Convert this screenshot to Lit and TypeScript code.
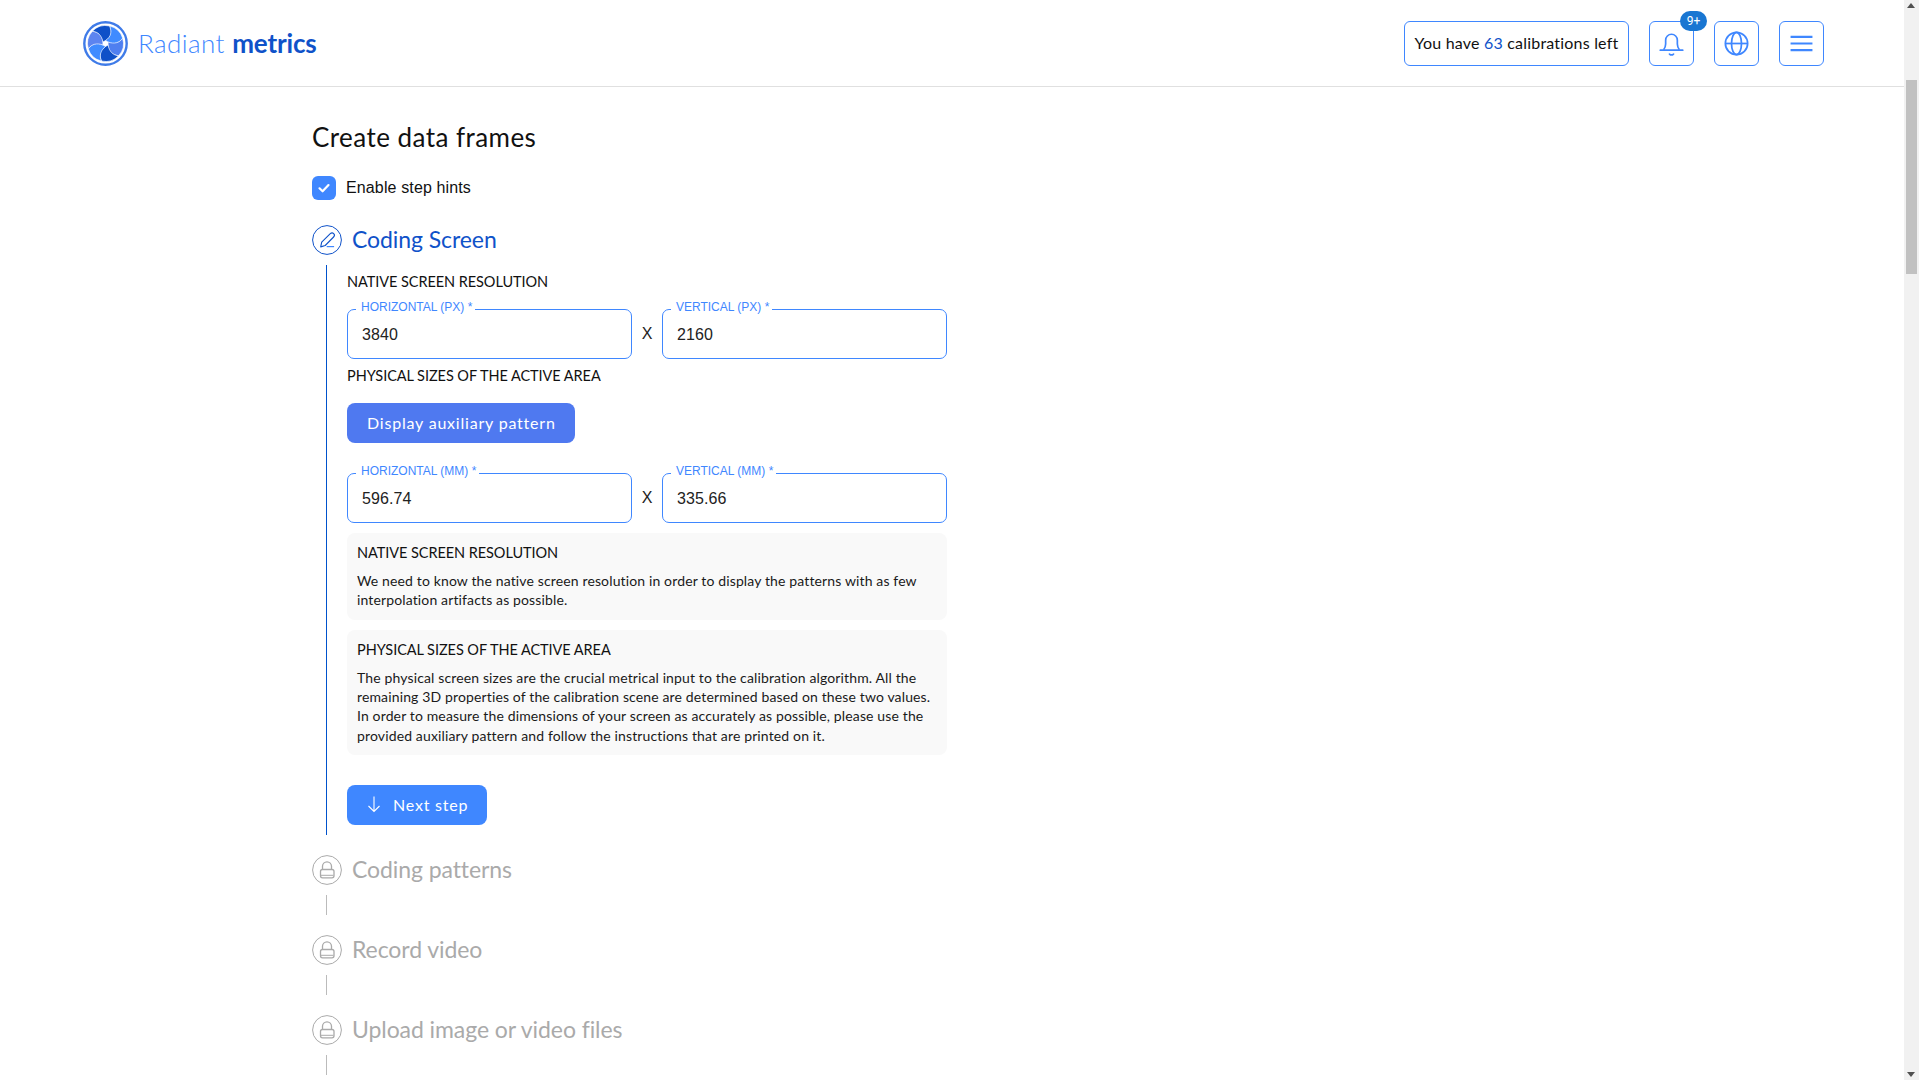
import { LitElement, html, css, svg } from "lit";
import { customElement } from "lit/decorators.js";

const blades = [
  { a: 0, c: "#3f8bff" },
  { a: 60, c: "#4f7ff0" },
  { a: 120, c: "#0e50c8" },
  { a: 180, c: "#3f8bff" },
  { a: 240, c: "#5c84f0" },
  { a: 300, c: "#0e50c8" },
];

const logo = html`<svg class="logo" viewBox="0 0 45 45" aria-hidden="true">
  <circle cx="22.5" cy="22.5" r="21.2" fill="none" stroke="#3f7be8" stroke-width="2.4"></circle>
  <g transform="translate(22.5 22.5)">
    ${blades.map(
      (b) => svg`<path transform="rotate(${b.a})" fill=${b.c} stroke="#fff" stroke-width=".55"
        d="M0-3C5-7 6.500-12.500 4-17.500A17.900 17.900 0 0 1 17.160-5.290C13.500-.2 8.600 1.600 2.600-1.500Z"></path>`
    )}
  </g>
</svg>`;

const bell = html`<svg viewBox="0 0 24 24" class="ico bell" aria-hidden="true">
  <path d="M5 17.500c1.100-1.400 1.800-3 1.800-5V9a5.200 5.200 0 0 1 10.400 0v3.500c0 2 .7 3.600 1.800 5" fill="none" stroke="currentColor" stroke-width="1.500" stroke-linejoin="round"></path>
  <path d="M2 17.900h20" fill="none" stroke="currentColor" stroke-width="1.500" stroke-linecap="round"></path>
  <path d="M10.200 21.400c1 .9 2.600.9 3.600 0" fill="none" stroke="currentColor" stroke-width="1.500" stroke-linecap="round"></path>
</svg>`;

const globe = html`<svg viewBox="0 0 26 26" class="ico" aria-hidden="true">
  <g fill="none" stroke="currentColor" stroke-width="1.800">
    <circle cx="13" cy="13" r="11.600"></circle>
    <ellipse cx="13" cy="13" rx="5.200" ry="11.600"></ellipse>
    <path d="M1.400 13h23.200"></path>
  </g>
</svg>`;

const menu = html`<svg viewBox="0 0 24 24" class="ico" aria-hidden="true">
  <path d="M1.500 5.600h21M1.500 12h21M1.500 18.400h21" fill="none" stroke="currentColor" stroke-width="2.100"></path>
</svg>`;

const pencil = html`<svg viewBox="0 0 30 30" class="step-ico" aria-hidden="true">
  <circle cx="15" cy="15" r="14.400" fill="none" stroke="currentColor" stroke-width="1"></circle>
  <path d="M8.700 21.900l1-4.800 8.600-8.400c1-1 2.500-1 3.400-.1s.9 2.400-.1 3.400l-8.400 8.500z" fill="none" stroke="currentColor" stroke-width="1.100" stroke-linejoin="round"></path>
  <path d="M14.700 21.600h7.400" fill="none" stroke="#3f87ff" stroke-width="1.200"></path>
</svg>`;

const lock = html`<svg viewBox="0 0 30 30" class="step-ico" aria-hidden="true">
  <circle cx="15" cy="15" r="14.400" fill="none" stroke="currentColor" stroke-width="1"></circle>
  <path d="M10.500 14.500v-3.200a4.500 4.500 0 0 1 9 0v3.200" fill="none" stroke="currentColor" stroke-width="1.300"></path>
  <rect x="8.500" y="14.500" width="13.500" height="8.300" rx="2" fill="none" stroke="currentColor" stroke-width="1.300"></rect>
  <path d="M9 20.300h12.500" fill="none" stroke="currentColor" stroke-width="1"></path>
</svg>`;

const check = html`<svg viewBox="0 0 24 24" class="check" aria-hidden="true">
  <path d="M7.500 12.300l3.100 3 5.900-6.200" fill="none" stroke="#fff" stroke-width="2.200" stroke-linecap="round" stroke-linejoin="round"></path>
</svg>`;

const arrow = html`<svg viewBox="0 0 14 20" class="arrow" aria-hidden="true">
  <path d="M7 2.500v15M1.500 12l5.500 5.500 5.500-5.500" fill="none" stroke="#fff" stroke-width="1.100"></path>
</svg>`;

const field = (label: string, value: string) => html`<div class="field">
  <label>${label}</label>
  <input .value=${value} />
</div>`;

@customElement("app-root")
export class AppRoot extends LitElement {
  static styles = css`
    :host {
      display: block;
      height: 1080px;
      overflow: hidden;
      background: #fff;
      color: #111;
      font-family: "Lato", "Open Sans", sans-serif;
      --blue: #3f87ff;
      --deep: #0f52c9;
    }
    * { box-sizing: border-box; }
    .page { width: 1904px; }
    header {
      height: 87px;
      border-bottom: 1px solid #e0e0e0;
      display: flex;
      align-items: center;
      padding: 0 80px 0 83px;
    }
    .brand { display: flex; align-items: center; gap: 10px; }
    .logo { width: 45px; height: 45px; display: block; }
    .wordmark { font-size: 26px; line-height: 34px; padding-bottom: 1px; font-weight: 300; color: var(--blue); letter-spacing: .4px; white-space: pre; }
    .wordmark b { font-weight: 700; color: var(--deep); letter-spacing: -.15px; }
    .tools { margin-left: auto; display: flex; align-items: center; gap: 20px; }
    .calib {
      height: 45px;
      width: 225px;
      padding-bottom: 1px;
      border: 1px solid var(--blue);
      border-radius: 6px;
      display: flex;
      align-items: center;
      justify-content: center;
      font-size: 16px;
      letter-spacing: .2px;
      white-space: pre;
    }
    .calib b { font-weight: 400; color: var(--deep); }
    .tbtn {
      position: relative;
      width: 45px;
      height: 45px;
      border: 1px solid var(--blue);
      border-radius: 6px;
      color: var(--blue);
      display: flex;
      align-items: center;
      justify-content: center;
    }
    .ico { width: 25px; height: 25px; display: block; }
    .ico.bell { width: 27px; height: 27px; }
    .badge {
      position: absolute;
      top: -11px;
      right: -14px;
      width: 27px;
      height: 20px;
      border-radius: 10px;
      background: #1976d2;
      color: #fff;
      font: 12px/20px "Roboto", sans-serif;
      text-align: center;
    }
    main { padding: 33px 0 0 312px; }
    h1 { margin: 0; font-size: 26px; line-height: 34px; font-weight: 400; letter-spacing: .45px; color: #111; }
    .hints {
      margin-top: 22px;
      height: 24px;
      display: flex;
      align-items: center;
      gap: 10px;
      font: 16px/24px "Liberation Sans", sans-serif;
      letter-spacing: .13px;
    }
    .box { width: 24px; height: 24px; border-radius: 6px; background: var(--blue); }
    .check { width: 24px; height: 24px; display: block; }
    .step-head {
      margin-top: 20px;
      height: 30px;
      display: flex;
      align-items: center;
      gap: 10px;
      font-size: 23px;
      line-height: 28px;
      letter-spacing: -.08px;
      color: #aaa;
    }
    .step-head span { padding-bottom: 2px; }
    .step-head.first { margin-top: 25px; }
    .step-head.active { color: var(--deep); }
    .step-ico { width: 30px; height: 30px; display: block; flex: none; color: #aaa; }
    .active .step-ico { color: var(--deep); }
    .rail {
      margin: 10px 0 0 14px;
      height: 20px;
      width: 1px;
      background: #bbb;
    }
    .body {
      margin: 10px 0 0 14px;
      border-left: 1px solid #0052cc;
      padding: 6px 0 10px 20px;
      width: 621px;
      height: 570px;
    }
    .cap { font-size: 14.5px; line-height: 21px; margin-bottom: -1px; letter-spacing: -.06px; color: #111; }
    .pair {
      margin-top: 18px;
      display: grid;
      grid-template-columns: 285px 30px 285px;
      align-items: center;
    }
    .pair.low { margin-top: 30px; }
    .x { text-align: center; font: 16px/20px "Liberation Sans", sans-serif; color: #222; }
    .field {
      position: relative;
      height: 50px;
      border: 1px solid var(--blue);
      border-radius: 7px;
    }
    .field label {
      position: absolute;
      top: -10px;
      left: 8px;
      padding: 0 3px 0 5px;
      background: #fff;
      color: var(--blue);
      font: 12px/14px "Liberation Sans", sans-serif;
      white-space: nowrap;
    }
    .field input {
      width: 100%;
      height: 100%;
      border: 0;
      outline: 0;
      background: transparent;
      padding: 2px 14px 0;
      font: 16px "Liberation Sans", sans-serif;
      letter-spacing: .1px;
      color: #222;
    }
    .cap.second { margin-top: 6px; }
    .btn {
      display: flex;
      align-items: center;
      height: 40px;
      border: 0;
      border-radius: 8px;
      color: #fff;
      font-family: inherit;
      font-size: 16px;
      letter-spacing: .8px;
      white-space: nowrap;
      padding: 0 20px 2px;
    }
    .btn.aux { margin-top: 18px; width: 228px; background: #4f79f0; }
    .btn.next { margin-top: 30px; width: 140px; background: var(--blue); gap: 12px; }
    .arrow { width: 14px; height: 20px; display: block; flex: none; }
    .hint {
      margin-top: 10px;
      width: 600px;
      background: #f9f9f9;
      border-radius: 8px;
      padding: 9px 10px 10.5px;
      color: #1a1a1a;
    }
    .hint p { margin: 9px 0 0; font-size: 14px; line-height: 19.2px; letter-spacing: .135px; }
    .sb {
      position: fixed;
      top: 0;
      left: 1904px;
      width: 15px;
      height: 1080px;
      background: #f1f1f1;
    }
    .thumb { position: absolute; top: 80px; left: 2px; width: 11px; height: 194px; background: #c1c1c1; }
    .tri { position: absolute; left: 3px; width: 0; height: 0; border: 4.5px solid transparent; }
    .tri.up { top: 3px; border-top-width: 0; border-bottom: 5px solid #505050; }
    .tri.down { bottom: 3px; border-bottom-width: 0; border-top: 5px solid #505050; }
  `;

  render() {
    return html`
      <div class="page">
        <header>
          <div class="brand">
            ${logo}
            <div class="wordmark">Radiant <b>metrics</b></div>
          </div>
          <div class="tools">
            <div class="calib">You have <b>63</b> calibrations left</div>
            <div class="tbtn">${bell}<span class="badge">9+</span></div>
            <div class="tbtn">${globe}</div>
            <div class="tbtn">${menu}</div>
          </div>
        </header>
        <main>
          <h1>Create data frames</h1>
          <div class="hints"><span class="box">${check}</span><span>Enable step hints</span></div>
          <div class="step-head first active">${pencil}<span>Coding Screen</span></div>
          <section class="body">
            <div class="cap">NATIVE SCREEN RESOLUTION</div>
            <div class="pair">
              ${field("HORIZONTAL (PX) *", "3840")}
              <span class="x">X</span>
              ${field("VERTICAL (PX) *", "2160")}
            </div>
            <div class="cap second">PHYSICAL SIZES OF THE ACTIVE AREA</div>
            <button class="btn aux">Display auxiliary pattern</button>
            <div class="pair low">
              ${field("HORIZONTAL (MM) *", "596.74")}
              <span class="x">X</span>
              ${field("VERTICAL (MM) *", "335.66")}
            </div>
            <div class="hint">
              <div class="cap">NATIVE SCREEN RESOLUTION</div>
              <p>We need to know the native screen resolution in order to display the patterns with as few interpolation artifacts as possible.</p>
            </div>
            <div class="hint">
              <div class="cap">PHYSICAL SIZES OF THE ACTIVE AREA</div>
              <p>The physical screen sizes are the crucial metrical input to the calibration algorithm. All the remaining 3D properties of the calibration scene are determined based on these two values. In order to measure the dimensions of your screen as accurately as possible, please use the provided auxiliary pattern and follow the instructions that are printed on it.</p>
            </div>
            <button class="btn next">${arrow}<span>Next step</span></button>
          </section>
          ${["Coding patterns", "Record video", "Upload image or video files"].map(
            (t) => html`<div class="step-head">${lock}<span>${t}</span></div><div class="rail"></div>`
          )}
        </main>
      </div>
      <div class="sb" aria-hidden="true">
        <span class="tri up"></span>
        <div class="thumb"></div>
        <span class="tri down"></span>
      </div>
    `;
  }
}
